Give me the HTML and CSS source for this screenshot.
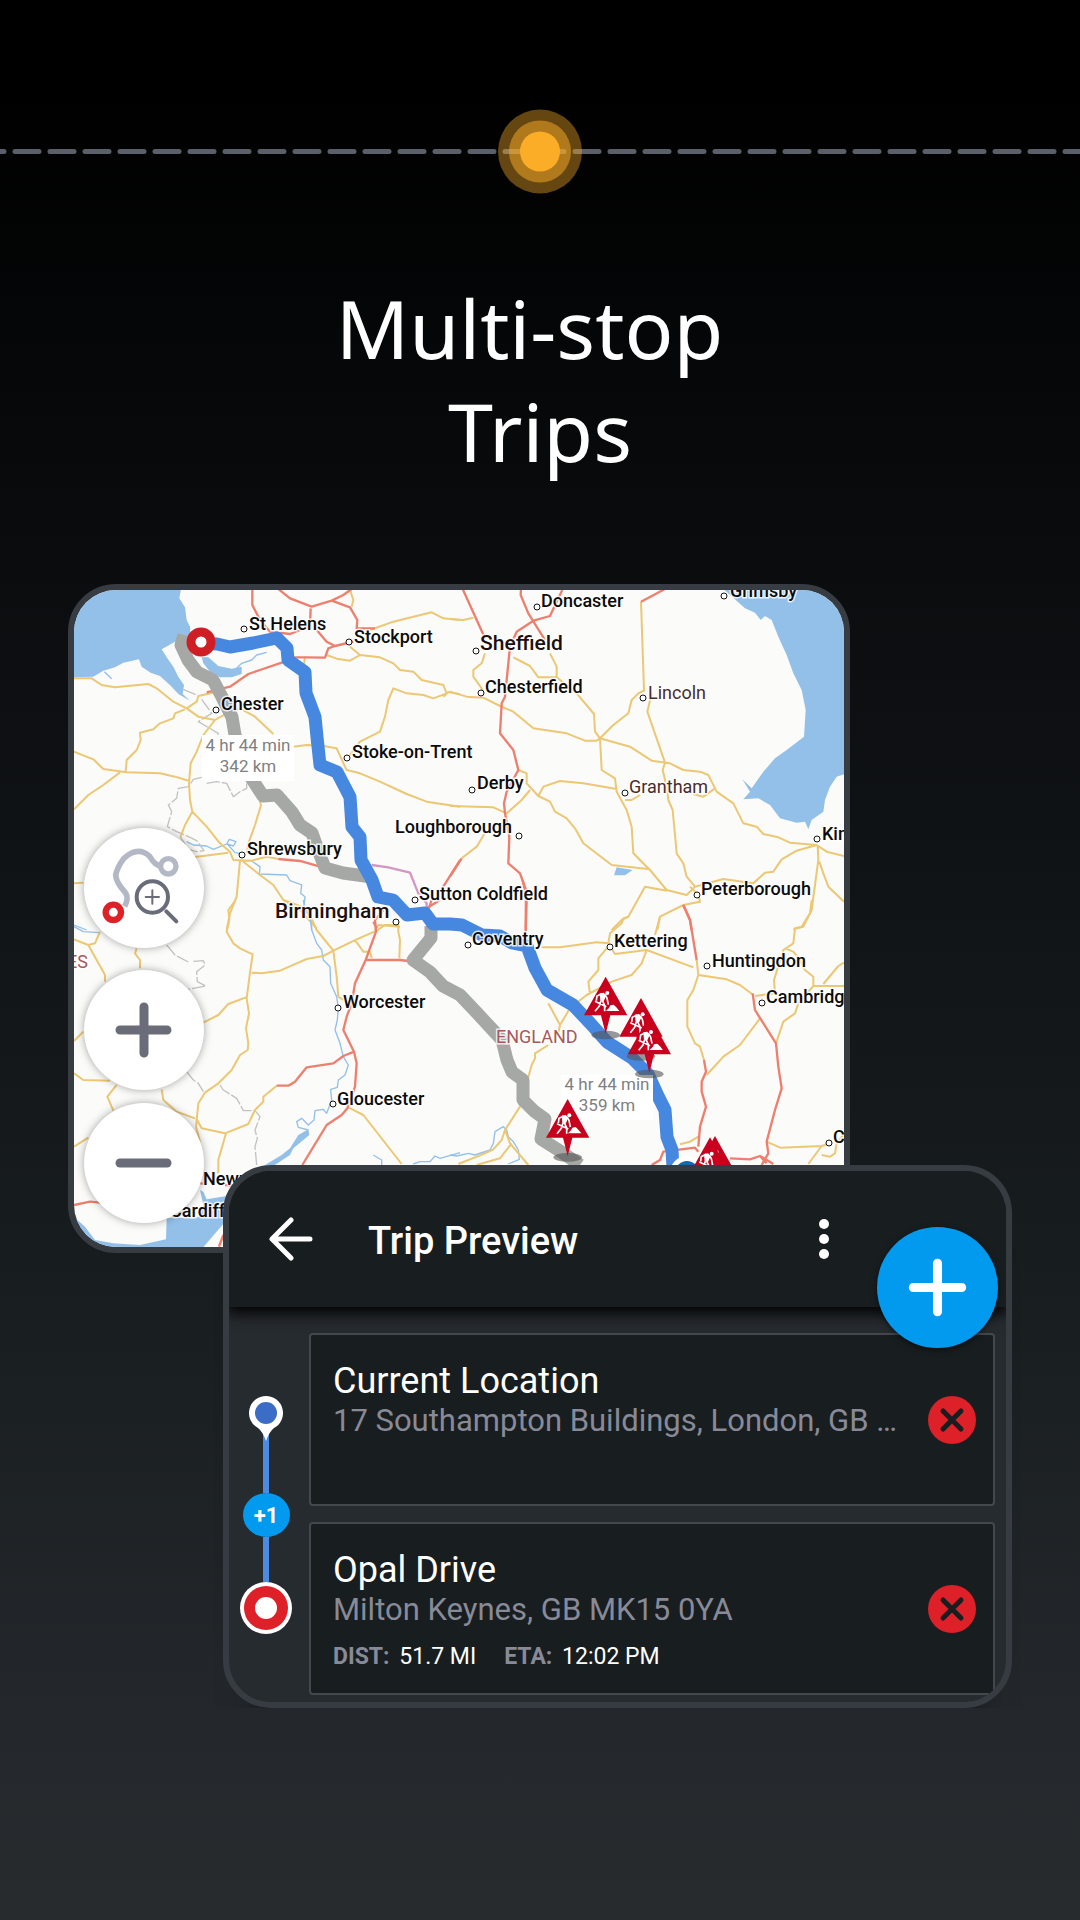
FILE: index.html
```html
<!DOCTYPE html>
<html lang="en">
<head>
  <meta charset="UTF-8" />
  <meta name="viewport" content="width=device-width, initial-scale=1.0" />
  <title>Multi-stop Trips</title>
  <link rel="stylesheet" href="styles.css">
</head>
<body>
  <svg class="track" aria-hidden="true">
    <line class="track-line" x1="-20" y1="50%" x2="100%" y2="50%" />
    <circle cx="50%" cy="50%" r="42" fill="#fcad27" fill-opacity=".4" />
    <circle cx="50%" cy="50%" r="31" fill="#fcad27" fill-opacity=".5" />
    <circle cx="50%" cy="50%" r="20" fill="#fcad27" />
  </svg>

  <h1>Multi-stop&nbsp;<br>Trips</h1>

  <main>
    <section class="map-card" aria-label="Route map">
      <svg class="map" viewBox="74 590 770 657" role="img" aria-label="Map of England with two routes">
        <defs>
          <g id="roadworks">
            <ellipse cx="0" cy="175" rx="43" ry="13" fill="#555" fill-opacity=".6" />
            <path d="M0 0L65 116H14L0 171L-14 116H-65Z" fill="#c8001d" />
            <circle cx="5" cy="49" r="6" fill="#fff" />
            <path d="M-18 50L-6 48L2 56L-6 74L-16 72Z" fill="#fff" />
            <path d="M-12 51L-26 58L-28 72M-2 54L4 64L8 84M-14 72L-19 88L-32 104M-10 72L-3 86V104M-32 74L2 90" fill="none" stroke="#fff" stroke-width="5" />
            <path d="M1 103L10 94L14 86L24 84L32 92L41 103Z" fill="#fff" />
          </g>
        </defs>

        <rect class="land" x="74" y="590" width="770" height="657" />

        <!-- north west -->
        <g transform="translate(60 570) scale(.33333)">
          <path class="sea" d="M42 57H363L358 85L375 112L380 150L390 170L392 200L345 215L305 238L320 262L340 290L355 320L372 345L368 372L390 392L355 372L330 345L300 318L272 308L245 290L237 268L190 278L165 292L130 302L100 320L42 322ZM425 262L445 262L475 288L515 296L545 290L545 312L515 322L480 322L450 305L430 280Z" />
          <path class="river" d="M530 295L545 280L575 270L590 255L620 247M133 305L155 326M380 815L400 825L440 828L460 838L500 822L508 808L528 815L520 828L502 822L525 848L540 850M570 870L600 890L598 912L680 915L690 932L725 945L722 970L735 980L732 1010L745 1030L755 1050L755 1080M42 1065L80 1080" />
          <path class="border" d="M370 358L410 375M425 388L455 430L415 455L475 490L470 510M425 622L400 628L385 650L355 655L350 685L325 705L335 725L322 770L350 785L375 795L410 812L432 842L410 845L385 838L360 800M440 640L470 635L500 640L520 680L540 665L560 655V640" />
          <path class="road" d="M42 325H95L125 345L165 352L265 342L290 355L340 395L380 415L415 440L465 450M380 415L410 395L415 378L465 367M375 418L345 430L340 445L300 460L280 478L240 488L242 510L230 540L200 570L197 605M42 545L100 568L130 597L200 607L300 610L345 620L388 633M42 718L85 675L130 645L180 607M465 450L430 495L410 545L392 580L387 640L390 690L397 725L440 770L480 820L510 845L520 870L575 872M397 725L375 765L362 800M465 450L500 430L540 415L585 440L640 492M700 530L740 525L790 528L830 535L855 590L860 600L900 610L960 635L1040 672L1100 695L1200 710M590 660L603 705L585 765L565 820L560 850M42 940L70 938M400 862L505 848M540 872L530 980L510 1030L500 1080M575 872L620 860L655 867M550 875L600 915L640 945L670 990L720 1020L770 1075M730 300L735 260M870 230L900 255L870 272L830 266L800 255M900 255L960 262L1000 280L1020 300L1060 305L1085 330L1150 345L1160 370L1120 385L1090 375L1040 370L1000 355L985 390L975 440L960 485L900 515L870 555M1150 380L1165 366L1200 373M930 180L1000 155L1060 140L1115 127L1150 145L1200 150M870 60L880 90L875 110M945 1080L955 1065L1020 1070" />
          <path class="motorway" d="M577 57L577 105L600 150L630 185L690 192L720 180L750 165L752 115M655 57L690 85L755 110L815 92L850 75L875 57M815 92L870 112L892 150L890 175H945M770 180L800 215L825 228L880 215M825 228L805 235L795 263L740 262H700L665 278L600 300L565 312L510 350L440 367M655 867L720 873L780 890M1200 870L1150 950M1140 990L1100 1015M940 1055L950 1075" />
          <path class="toll" d="M935 885L985 892L1050 908L1075 970L1100 1000V1030" />
        </g>

        <!-- north east -->
        <g transform="translate(450 570) scale(.33333)">
          <path class="sea" d="M820 57L885 115L915 128L932 150L945 138L965 150L985 200L1010 255L1030 310L1055 360L1067 420L1062 500L1010 540L975 565L940 605L905 655L877 628L900 665L880 688L925 685L960 705L990 745L1040 758L1065 755L1075 778L1085 750L1120 725L1125 690L1140 650L1160 620L1182 613V57ZM500 892L548 900L525 916L492 916Z" />
          <path class="road" d="M0 147L40 150L70 143M105 250L95 280L70 300V320L95 355L100 370M0 365L50 380L100 383L150 408L190 425L250 475L300 482L350 490L405 512L440 512L450 505L490 465L535 430L545 390L565 370L585 360M573 95L582 360M605 370L592 425L645 578L638 600L650 650L655 690L668 720L680 850L700 880L710 920L735 950M190 262L240 288L265 322H320V290L300 250M320 322L380 370L432 432L435 485L450 505M450 505L540 530L605 572L660 580L700 600L750 605L775 615L800 665L850 700L880 760L920 770L940 792L985 802L1020 818L1100 825M450 505L455 600L495 625L500 665L530 720L545 770L550 850L600 900L650 960L710 975L735 950M205 600L230 610V640L265 678L300 695L315 725L350 745L375 775L400 820L485 885L600 898M265 678L280 650L330 633L400 640L500 657M525 690L545 690L570 675M730 672L760 680L795 655M240 660L215 690L170 730L130 712L0 708M110 780L80 830L35 865M650 962L585 950L535 1040L515 1050L485 1080M735 950L820 927L910 940L945 908L970 905L995 868L1040 842L1100 825M720 950L745 975L750 995L700 1005L630 1040L622 1080M1100 825L1130 845L1182 858M1103 825L1105 870L1085 1020L1060 1070L1030 1078M1108 875L1120 910L1135 950L1182 995" />
          <path class="motorway" d="M38 57L105 205M213 57L212 75L235 130L285 210M337 60L320 95L300 138L250 152L200 185L180 230L165 380L155 400L150 490L190 540L205 600L170 665L162 700L165 730L178 800L175 880L210 910L228 960L227 1080M573 95L645 57M0 920L35 865M700 1005L720 1050L725 1080" />
        </g>

        <!-- south west -->
        <g transform="translate(60 900) scale(.33333)">
          <path class="sea" d="M745 688L748 705L700 745L690 765L640 798H610L665 765L690 745L715 705ZM42 950L75 980L105 1020L160 1030L240 1035L318 1018L320 955L415 952L430 915L420 870L430 875L440 898L500 888V960L440 1030L430 1042H42Z" />
          <path class="river" d="M730 0L735 30L750 50L755 90L770 130L785 150L790 180L810 200L812 250L830 290L835 325L832 360L825 390L840 430L850 470L865 495L855 525L835 540L832 562L812 568L815 600L800 640L790 628L765 632L762 660L745 675L725 655L710 665L715 682L745 690M42 80L70 95L120 98M1060 792L1080 785L1110 785L1125 768L1140 775L1200 758M940 765L965 780V795" />
          <path class="border" d="M320 135L345 165L385 186M400 184L430 182L435 195L410 215L412 245L438 258L385 268M380 515L400 540L415 550L430 575M480 555L490 570L530 595L550 632L585 632L600 650L585 690L592 715L585 740L590 795" />
          <path class="road" d="M42 118L85 135L105 130L120 95M85 135L135 225L135 245M230 145L225 160L240 180V205M527 0L505 30L508 60L500 95L520 130L540 145L578 163L570 218L560 295L567 340L558 385L565 430L563 450L540 465L515 510L475 550L435 578L415 610L408 680M575 218L605 220L660 212L710 190L740 177L790 168L820 152L890 118L950 92L975 75H1015V95L1020 120L1018 175M430 368L475 345L505 312L558 292M670 0L740 25L770 90L820 152L830 230L835 290L850 300M885 120L910 155H930L935 175M42 423L70 395M42 520L70 540L150 542M170 555L142 590L160 632M305 568L310 600L350 635L405 655M42 740L85 713M408 655L425 685L495 700L565 672L585 630L610 605V590L650 557M498 700L475 780V820M408 680L420 725M865 622L910 645L1025 792" />
          <path class="motorway" d="M42 915L90 905L120 908M970 30L945 60L948 95L917 180L885 250L875 310L860 350L850 390L882 455L890 490L885 560L862 625L845 645L800 675L727 795M917 180H1020L1045 183M650 557L685 557L705 545L740 502L820 490L850 468L882 455M1115 0L1105 30M477 1040L490 1005M415 848L430 852M495 855L530 858" />
        </g>

        <!-- south east -->
        <g transform="translate(450 880) scale(.33333)">
          <path class="river" d="M0 825L20 828L55 820L75 825L120 810L130 790L135 755L160 740L170 750L175 770L190 785L205 810L208 838L175 852" />
          <path class="road" d="M275 202L330 202L440 187L475 190M535 110L520 115L515 130L480 160L475 190L495 222L590 210M590 210L730 262M590 210L575 250L545 285L485 305L410 345L360 385L330 435L295 370M470 205L445 235V270L415 305L420 340M630 110L615 165M740 240L745 285L830 298L870 315L910 345M745 285L730 330L712 360V440L735 490L750 500L762 540M330 435L325 460M295 495L255 520V535L245 555L210 680L165 750L155 780L130 808L105 820L25 852M165 750L180 790L235 855M80 855L150 835L185 790M915 348L975 340L972 300L1000 210L1030 190L1035 145L1055 140L1080 100L1085 60M1005 205L1030 215L1050 240L1065 270L1090 290V318L1182 318M1090 318L1045 370L1035 400L1000 425L978 490M1120 312L1165 258L1182 248M930 415L870 495L820 530L770 585M950 785L990 803L1115 798L1140 790L1115 798L1075 852M1115 825L1140 830L1155 820L1160 790L1180 765M690 793L720 785L745 770" />
          <path class="motorway" d="M218 0L230 60L227 160M700 75L720 120L740 240M908 340L915 390L978 490L985 560L995 625L975 690L950 785L955 820L935 855M762 540L768 575L755 605V635L768 680L750 740L745 800M605 855L630 840L640 815L735 803L745 815M840 835L900 838L930 828L970 852M930 828L950 850" />
        </g>

        <!-- alternative and selected routes -->
        <path class="route alt" d="M184 635L181 645L188 660L197 672L213 680L222 697L232 717L235 735L250 776L263 796L277 795L292 812L300 825L312 833L318 850L325 868L343 873L372 877M431 926L431 938L413 960L430 972L443 986L460 995L478 1014L490 1027L502 1040L507 1060L512 1072L523 1080L523 1100L534 1111L545 1119L541 1139L560 1151L580 1165" />
        <path class="route main" d="M202 643L217 644L230 647L253 643L277 638L287 648L288 660L305 672L306 693L315 717L317 737L320 765L337 772L350 797L352 827L360 837L361 860L372 880L378 897L393 900L407 915L425 913L433 924H450L462 925L482 935L500 936L512 943L527 946L535 968L547 990L573 1005L590 1023L607 1042L632 1058L648 1074L658 1096L665 1110L667 1137L672 1150L673 1168" />

        <g class="dots">
          <circle cx="244" cy="629" r="3" /><circle cx="349" cy="642" r="3" />
          <circle cx="216" cy="710" r="3" /><circle cx="347" cy="758" r="3" />
          <circle cx="519" cy="836" r="3" /><circle cx="242" cy="855" r="3" />
          <circle cx="396" cy="922" r="3" /><circle cx="415" cy="900" r="3" />
          <circle cx="537" cy="607" r="3" /><circle cx="724" cy="596" r="3" />
          <circle cx="476" cy="651" r="3" /><circle cx="481" cy="693" r="3" />
          <circle cx="643" cy="698" r="3" /><circle cx="472" cy="790" r="3" />
          <circle cx="625" cy="793" r="3" /><circle cx="817" cy="839" r="3" />
          <circle cx="697" cy="895" r="3" /><circle cx="468" cy="945" r="3" />
          <circle cx="610" cy="947" r="3" /><circle cx="707" cy="966" r="3" />
          <circle cx="762" cy="1003" r="3" /><circle cx="829" cy="1143" r="3" />
          <circle cx="338" cy="1008" r="3" /><circle cx="333" cy="1104" r="3" />
        </g>

        <g class="places">
          <text x="249" y="630">St Helens</text>
          <text x="354" y="643">Stockport</text>
          <text x="221" y="710">Chester</text>
          <text x="352" y="758">Stoke-on-Trent</text>
          <text x="395" y="833">Loughborough</text>
          <text x="247" y="855">Shrewsbury</text>
          <text class="city" x="275" y="918">Birmingham</text>
          <text x="419" y="900">Sutton Coldfield</text>
          <text x="541" y="607">Doncaster</text>
          <text x="730" y="597">Grimsby</text>
          <text class="city" x="480" y="650">Sheffield</text>
          <text x="485" y="693">Chesterfield</text>
          <text class="town" x="648" y="699">Lincoln</text>
          <text x="477" y="789">Derby</text>
          <text class="town" x="629" y="793">Grantham</text>
          <text x="822" y="840">King's Lynn</text>
          <text x="701" y="895">Peterborough</text>
          <text x="472" y="945">Coventry</text>
          <text x="614" y="947">Kettering</text>
          <text x="712" y="967">Huntingdon</text>
          <text x="766" y="1003">Cambridge</text>
          <text x="833" y="1143">Colchester</text>
          <text x="343" y="1008">Worcester</text>
          <text x="337" y="1105">Gloucester</text>
          <text x="203" y="1185">Newport</text>
          <text x="170" y="1217">Cardiff</text>
          <text class="country" x="496" y="1043">ENGLAND</text>
          <text class="country" x="88" y="968" text-anchor="end">WALES</text>
        </g>

        <g class="times">
          <rect x="202" y="735" width="92" height="46" />
          <text x="248" y="751">4 hr 44 min</text>
          <text x="248" y="772">342 km</text>
          <rect x="561" y="1075" width="92" height="45" />
          <text x="607" y="1090">4 hr 44 min</text>
          <text x="607" y="1111">359 km</text>
        </g>

        <circle cx="201" cy="642" r="10" fill="#fff" stroke="#cf1f24" stroke-width="9" />
        <circle cx="687" cy="1173" r="17" fill="#fff" />
        <circle cx="687" cy="1173" r="12" fill="#0a6bb0" />

        <g transform="translate(450 880) scale(.33333)">
          <use href="#roadworks" x="467" y="290" />
          <use href="#roadworks" x="573" y="354" />
          <use href="#roadworks" x="598" y="407" />
          <use href="#roadworks" x="353" y="657" />
          <use href="#roadworks" x="795" y="768" />
          <use href="#roadworks" x="780" y="772" />
        </g>
      </svg>

      <div class="map-controls">
        <button type="button" class="route-view" aria-label="Show whole route">
          <svg viewBox="71 773 360 360" aria-hidden="true">
            <path d="M193 1008Q206 985 196 968Q168 938 166 915Q170 892 190 865Q232 825 268 858Q284 886 304 888" fill="none" stroke="#b3b8c4" stroke-width="17" />
            <circle cx="324" cy="888" r="23" fill="#fff" stroke="#b3b8c4" stroke-width="16" />
            <circle cx="159" cy="1026" r="23" fill="#fff" stroke="#de2029" stroke-width="19" />
            <g fill="none" stroke="#6b6c7a" stroke-width="12" stroke-linecap="round">
              <circle cx="276" cy="980" r="47" fill="#fff" />
              <path d="M318 1023L348 1053" />
              <path d="M256 980H296M276 960V1000" stroke-width="6" />
            </g>
          </svg>
        </button>
        <button type="button" aria-label="Zoom in">
          <svg viewBox="0 0 120 120" aria-hidden="true"><path d="M36 60H83M60 37V83" stroke="#6b6c7a" stroke-width="9" stroke-linecap="round" /></svg>
        </button>
        <button type="button" aria-label="Zoom out">
          <svg viewBox="0 0 120 120" aria-hidden="true"><path d="M36 60H83" stroke="#6b6c7a" stroke-width="9" stroke-linecap="round" /></svg>
        </button>
      </div>
    </section>

    <section class="trip">
      <header class="trip-header">
        <button type="button" class="icon-btn" aria-label="Back">
          <svg width="44" height="44" viewBox="0 0 44 44" aria-hidden="true"><path d="M41 22H4M22 3L3 22L22 41" fill="none" stroke="#fff" stroke-width="5" stroke-linecap="round" stroke-linejoin="round" /></svg>
        </button>
        <h2>Trip Preview</h2>
        <button type="button" class="icon-btn" aria-label="More options">
          <svg width="10" height="44" viewBox="0 0 10 44" fill="#fff" aria-hidden="true"><circle cx="5" cy="7" r="5" /><circle cx="5" cy="22" r="5" /><circle cx="5" cy="37" r="5" /></svg>
        </button>
      </header>

      <button type="button" class="add-stop" aria-label="Add stop">
        <svg viewBox="0 0 120 120" aria-hidden="true"><path d="M36 60H84M60 36V84" stroke="#fff" stroke-width="9" stroke-linecap="round" /></svg>
      </button>

      <div class="trip-body">
        <div class="timeline">
          <svg class="pin" width="34" height="46" viewBox="0 0 34 46" aria-hidden="true">
            <path d="M17 0A17 17 0 0 1 25 32Q20 36 17 45Q14 36 9 32A17 17 0 0 1 17 0Z" fill="#fff" />
            <circle cx="17" cy="17" r="11" fill="#3b6cc6" />
          </svg>
          <div class="leg leg-long"></div>
          <button type="button" class="more-stops" aria-label="+1 stop">+1</button>
          <div class="leg"></div>
          <svg width="52" height="52" viewBox="0 0 52 52" aria-hidden="true">
            <circle cx="26" cy="26" r="26" fill="#fff" />
            <circle cx="26" cy="26" r="22" fill="#de2029" />
            <circle cx="26" cy="26" r="11" fill="#fff" />
          </svg>
        </div>

        <ul class="stops">
          <li class="stop">
            <div class="stop-info">
              <h3>Current Location</h3>
              <p class="address">17 Southampton Buildings, London, GB …</p>
            </div>
            <button type="button" class="remove" aria-label="Remove Current Location">
              <svg viewBox="0 0 48 48" aria-hidden="true"><path d="M15 15L33 33M33 15L15 33" stroke="#181d1f" stroke-width="5" stroke-linecap="round" /></svg>
            </button>
          </li>
          <li class="stop">
            <div class="stop-info">
              <h3>Opal Drive</h3>
              <p class="address">Milton Keynes, GB MK15 0YA</p>
              <p class="details"><span><b>DIST:</b> 51.7 MI</span><span><b>ETA:</b> 12:02 PM</span></p>
            </div>
            <button type="button" class="remove" aria-label="Remove Opal Drive">
              <svg viewBox="0 0 48 48" aria-hidden="true"><path d="M15 15L33 33M33 15L15 33" stroke="#181d1f" stroke-width="5" stroke-linecap="round" /></svg>
            </button>
          </li>
        </ul>
      </div>
    </section>
  </main>
</body>
</html>
```
FILE: styles.css
```css
* {
  box-sizing: border-box;
}
html {
  min-height: 100%;
  background: linear-gradient(#000 5%, #0b0d0f 31%, #171c1f 65%, #25292d 92%, #272b2e);
}
body {
  margin: 0;
  padding-top: 109px;
  font-family: Roboto, sans-serif;
  color: #fff;
}
button {
  border: none;
  padding: 0;
  background: none;
  font: inherit;
  color: inherit;
  cursor: pointer;
}
button svg {
  display: block;
}
h1 {
  margin: 82px 0 102px;
  font-family: "Noto Sans", sans-serif;
  font-size: 81px;
  font-weight: 400;
  line-height: 103px;
  text-align: center;
}

/* dashed line with the orange marker */
.track {
  display: block;
  width: 100%;
  height: 85px;
}
.track-line {
  stroke: #5b5f69;
  stroke-width: 5;
  stroke-linecap: round;
  stroke-dasharray: 24 11;
}

/* map */
.map-card {
  position: relative;
  margin: 0 230px 0 68px;
  border: 6px solid #373c42;
  border-radius: 48px;
  overflow: hidden;
}
.map {
  display: block;
  width: 100%;
  height: auto;
}
.land {
  fill: #fbfbf9;
}
.sea {
  fill: #93c0e9;
}
.river, .border, .road, .motorway, .toll, .route {
  fill: none;
  stroke-linejoin: round;
}
.river {
  stroke: #93c0e9;
  stroke-width: 4;
}
.border {
  stroke: #c2c2c2;
  stroke-width: 4;
  stroke-dasharray: 40 6;
}
.road {
  stroke: #ecc774;
  stroke-width: 6;
}
.motorway {
  stroke: #ee7f6f;
  stroke-width: 7;
}
.toll {
  stroke: #d397c3;
  stroke-width: 7;
}
.route {
  stroke-width: 13;
}
.alt {
  stroke: #a5a8a5;
}
.main {
  stroke: #4688e0;
}
.dots circle {
  fill: #fff;
  stroke: #111;
  stroke-width: 1;
}
.places text {
  font-size: 18px;
  font-weight: 500;
  fill: #0b0b0b;
  stroke: #fff;
  stroke-width: 3;
  stroke-opacity: .8;
  paint-order: stroke;
}
.places .city {
  font-size: 21px;
  fill: #1c0f0f;
}
.places .town {
  font-weight: 400;
  fill: #4a2c2c;
}
.places .country {
  font-weight: 400;
  fill: #a9575c;
}
.times rect {
  fill: #fff;
}
.times text {
  font-size: 17px;
  fill: #808080;
  text-anchor: middle;
}
.map-controls {
  position: absolute;
  left: 10px;
  bottom: 24px;
  display: flex;
  flex-direction: column;
  gap: 13px;
}
.map-controls button {
  width: 120px;
  height: 120px;
  border-radius: 50%;
  background: #fff;
  box-shadow: 0 0 8px rgba(0,0,0,0.35);
}
.map-controls .route-view {
  margin-bottom: 9px;
}

/* trip panel */
.trip {
  position: relative;
  margin: -88px 68px 0 223px;
  border: 6px solid #373c42;
  border-radius: 48px;
  background: #262b2f;
  box-shadow: 0 60px 40px -40px rgba(0,0,0,0.5);
  overflow: hidden;
}
.trip-header {
  display: flex;
  align-items: center;
  height: 136px;
  padding: 0 177px 0 40px;
  background: #181d1f;
  box-shadow: 0 4px 14px 2px #000;
}
.trip-header h2 {
  flex: 1;
  margin: 4px 0 0 55px;
  font-size: 38px;
  font-weight: 500;
  line-height: 42px;
}
.add-stop {
  position: absolute;
  top: 56px;
  right: 8px;
  width: 121px;
  height: 121px;
  border-radius: 50%;
  background: #029aef;
  box-shadow: 0 2px 6px rgba(0,0,0,0.5);
}
.trip-body {
  display: flex;
  padding: 26px 11px 7px 0;
}
.timeline {
  display: flex;
  flex-direction: column;
  align-items: center;
  flex: 0 0 74px;
  margin-right: 6px;
  padding: 63px 0 61px;
}
.pin {
  margin-bottom: -8px;
  z-index: 1;
}
.leg {
  flex: 3;
  width: 6px;
  background: #4b8ce2;
}
.leg-long {
  flex: 4;
}
.more-stops {
  width: 47px;
  height: 44px;
  border-radius: 50%;
  background: #029aef;
  font-size: 22px;
  font-weight: 700;
}
.stops {
  flex: 1;
  min-width: 0;
  display: flex;
  flex-direction: column;
  gap: 16px;
  margin: 0;
  padding: 0;
  list-style: none;
}
.stop {
  display: flex;
  align-items: center;
  min-height: 173px;
  padding: 0 17px 0 22px;
  border: 2px solid #44484d;
  border-radius: 4px;
  background: #181d1f;
}
.stop-info {
  flex: 1;
  min-width: 0;
  align-self: flex-start;
  padding-top: 25px;
}
.stop h3 {
  margin: 0;
  font-size: 36px;
  font-weight: 400;
  line-height: 42px;
}
.stop p {
  margin: 0;
}
.stop .address {
  font-size: 31px;
  line-height: 38px;
  color: #888a98;
  white-space: nowrap;
  overflow: hidden;
  text-overflow: ellipsis;
}
.stop .details {
  display: flex;
  gap: 28px;
  margin-top: 13px;
  font-size: 23px;
  line-height: 30px;
}
.details b {
  margin-right: 4px;
  color: #888a98;
}
.remove {
  flex: none;
  width: 48px;
  height: 48px;
  border-radius: 50%;
  background: #de2029;
}
```
